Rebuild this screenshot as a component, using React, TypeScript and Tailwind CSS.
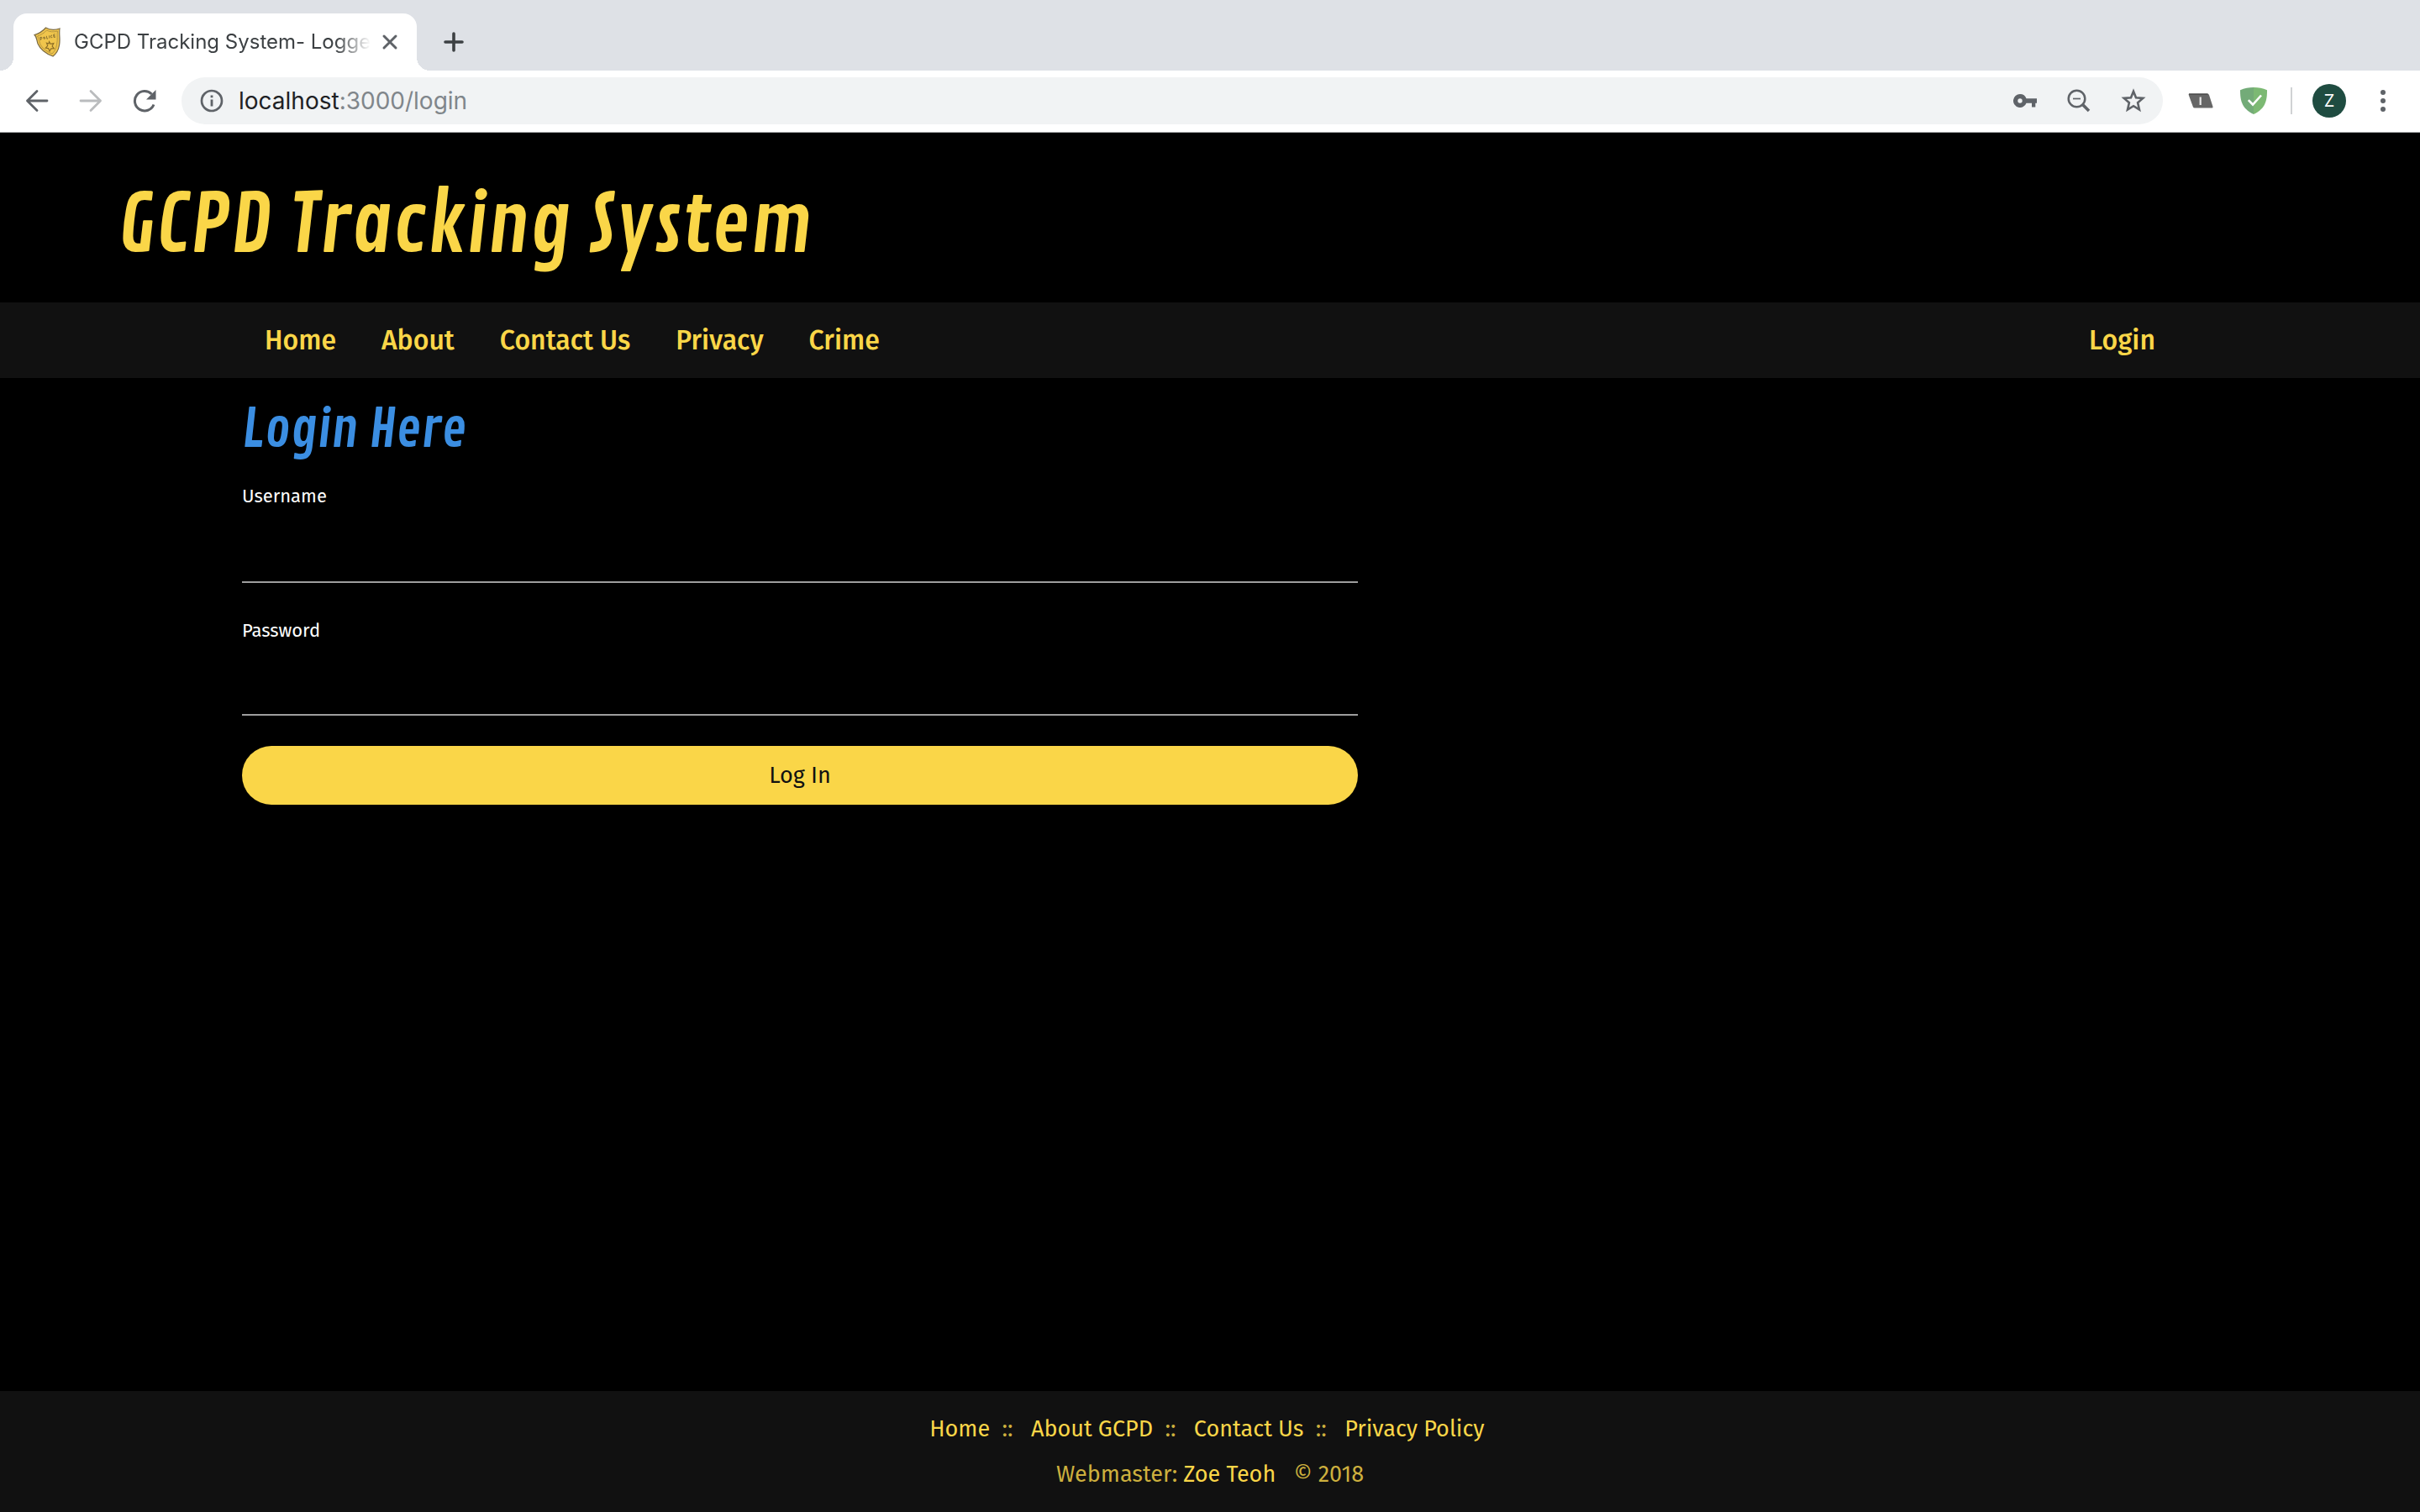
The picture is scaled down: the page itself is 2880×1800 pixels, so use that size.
import React from "react";

const pageFont = "font-['Fira_Sans','Noto_Sans',sans-serif]";
const titleFont = "font-['Contrail_One','Open_Sans_Condensed','Open_Sans',sans-serif]";

function Favicon() {
  return (
    <svg viewBox="0 0 32 36" className="h-9 w-8 shrink-0" aria-hidden="true">
      <path d="M1 9.500 C6 8 11 5 14.5 1 C19 3.500 25 4 31 2 C30 9 32 15 30.500 22 C29.500 28 27 32 23 35 C15 32 8 27 5 20 C3.500 16 4 12 1 9.500Z" fill="#f0c54c" stroke="#7a6a45" strokeWidth="1.200" />
      <path d="M4.500 11 C9 9.500 13 7 15.500 4 C19 6 24 6.500 28.500 5 C27.500 10 29 15 27.500 21.500 C26.500 26 25 29 22 32 C15 29 9.500 25 7.500 19.500 C6.500 16 6.500 14 4.500 11Z" fill="none" stroke="#a88a3c" strokeWidth="0.800" />
      <path d="M8.500 16 l-.8 -3.500 q2.500 -.8 2.300 1 q-.3 .8 -1.900 .8 M12 12 q1.900 0 1.600 2 q-1.600 1 -1.900 -.8z M15.300 10.800 l.6 3.400 l1.300 -.4 M18.500 10.300 l.5 3.200 M22 10 q-1.800 -.2 -1.500 1.800 q.4 1.600 1.800 .8 M25.500 8.800 l-1.800 .3 l.4 3.300 l2 -.4 M23.900 10.800 l1.500 -.2" fill="none" stroke="#7d672c" strokeWidth="0.900" />
      <path d="M18.500 17.500 l1.700 2.900 l3.600 -.8 l-1.700 3.300 l2.200 2.900 l-3.500 .1 l-1.800 3.100 l-1.400 -3.400 l-3.300 -.5 l2.500 -2.600 l-1.400 -3.300 l2.700 .8z" fill="none" stroke="#8a6c26" strokeWidth="1.100" />
    </svg>
  );
}

function BackIcon() {
  return (
    <svg viewBox="0 0 28 28" className="size-7" fill="none" stroke="currentColor" strokeWidth="2.800" strokeLinecap="round" strokeLinejoin="round" aria-hidden="true">
      <path d="M26 14H2.500M14 2.500 2.500 14 14 25.500" />
    </svg>
  );
}

function ForwardIcon() {
  return (
    <svg viewBox="0 0 28 28" className="size-7" fill="none" stroke="currentColor" strokeWidth="2.800" strokeLinecap="round" strokeLinejoin="round" aria-hidden="true">
      <path d="M2 14H25.500M14 2.500 25.500 14 14 25.500" />
    </svg>
  );
}

function ReloadIcon() {
  return (
    <svg viewBox="0 0 28 28" className="size-7" aria-hidden="true">
      <path d="M25 18.500A11.700 11.700 0 1 1 22.500 6" fill="none" stroke="currentColor" strokeWidth="3" />
      <path d="M27.500 1V12.500H16Z" fill="currentColor" />
    </svg>
  );
}

function InfoIcon() {
  return (
    <svg viewBox="0 0 28 28" className="size-7 shrink-0 text-[#5f6368]" aria-hidden="true">
      <circle cx="14" cy="14" r="12" fill="none" stroke="currentColor" strokeWidth="2.700" />
      <path d="M12.600 12.500h2.800v8h-2.800zM12.600 7.500h2.800v2.800h-2.800z" fill="currentColor" />
    </svg>
  );
}

function KeyIcon() {
  return (
    <svg viewBox="0 0 28 16" className="h-4 w-7" aria-hidden="true">
      <path fillRule="evenodd" fill="currentColor" d="M8 0a8 8 0 1 0 7.500 10.700H22V15.500h4.300V10.700H28V5.300H15.500A8 8 0 0 0 8 0ZM8 5.300a2.700 2.700 0 1 1 0 5.400a2.700 2.700 0 0 1 0-5.400Z" />
    </svg>
  );
}

function ZoomOutIcon() {
  return (
    <svg viewBox="0 0 28 28" className="size-7" fill="none" stroke="currentColor" aria-hidden="true">
      <circle cx="11.500" cy="11.500" r="9.800" strokeWidth="2.500" />
      <path d="M7 11.500H16" strokeWidth="1.700" />
      <path d="M18.800 18.800 26 26" strokeWidth="3.600" />
    </svg>
  );
}

function StarIcon() {
  return (
    <svg viewBox="0 0 30 30" className="h-[30px] w-[30px]" fill="none" stroke="currentColor" strokeWidth="2.600" aria-hidden="true">
      <path d="M15 3.800 18 11.200 26.300 11.900 20.100 17.200 22 25.500 15 21.200 8 25.500 9.900 17.200 3.700 11.900 12 11.200Z" />
    </svg>
  );
}

function TagIcon() {
  return (
    <svg viewBox="0 0 30 18" className="h-[18px] w-[30px]" aria-hidden="true">
      <path d="M1.500 .5H23Q24.500 .5 25 2L29.500 16Q29.800 17.500 28.500 17.500H8Q6.300 17.500 5.800 16L.7 2Q.3 .5 1.500 .5Z" fill="#666" />
      <path d="M1 1.200H23.500" stroke="#4d4d4d" strokeWidth="1.500" />
      <path d="M14.700 4.500V14" stroke="#e8e8e8" strokeWidth="2.200" />
    </svg>
  );
}

function ShieldIcon() {
  return (
    <svg viewBox="0 0 32 32" className="size-8" aria-hidden="true">
      <path d="M16 0C10.500 0 5 1 0 3.200C0 14 1 25 16 32Z" fill="#73ab78" />
      <path d="M16 0C21.500 0 27 1 32 3.200C32 14 31 25 16 32Z" fill="#7cb973" />
      <path d="M9.800 15.200 15 20.500 25 9.500" fill="none" stroke="#fff" strokeWidth="2.600" />
    </svg>
  );
}

function Tab() {
  return (
    <div className="relative flex h-[68px] w-[480px] items-center rounded-t-2xl bg-white pr-3.5 pl-6">
      <span className="absolute bottom-0 -left-4 size-4 bg-[radial-gradient(circle_at_0_0,transparent_16px,white_16px)]" />
      <span className="absolute -right-4 bottom-0 size-4 bg-[radial-gradient(circle_at_100%_0,transparent_16px,white_16px)]" />
      <Favicon />
      <p className="ml-4 text-2xl whitespace-nowrap text-[#3c4043] [mask-image:linear-gradient(to_right,black_88%,transparent)]">
        GCPD Tracking System- Logge
      </p>
      <button type="button" aria-label="Close tab" className="ml-auto flex size-9 shrink-0 items-center justify-center text-[#5f6368]">
        <svg viewBox="0 0 20 20" className="size-5" stroke="currentColor" strokeWidth="3" strokeLinecap="round" aria-hidden="true">
          <path d="M3 3 17 17M17 3 3 17" />
        </svg>
      </button>
    </div>
  );
}

function BrowserChrome() {
  return (
    <div className="border-b border-[#a9abad] bg-white font-['Inter',sans-serif]">
      <div className="flex h-[84px] items-end bg-[#dee1e6] pl-4">
        <Tab />
        <button type="button" aria-label="New tab" className="ml-6 flex h-[68px] w-10 items-center justify-center text-[#3c4043]">
          <svg viewBox="0 0 24 24" className="size-6" stroke="currentColor" strokeWidth="3.600" strokeLinecap="round" aria-hidden="true">
            <path d="M12 2V22M2 12H22" />
          </svg>
        </button>
      </div>
      <div className="flex h-[73px] items-center px-[30px] pb-px text-[#5f6368]">
        <div className="flex gap-9">
          <button type="button" aria-label="Back"><BackIcon /></button>
          <button type="button" aria-label="Forward" className="text-[#babcbe]"><ForwardIcon /></button>
          <button type="button" aria-label="Reload"><ReloadIcon /></button>
        </div>
        <div className="ml-[30px] flex h-14 grow items-center rounded-full bg-[#f1f3f4] pr-5 pl-[22px]">
          <InfoIcon />
          <p className="ml-[18px] grow text-[28px] text-[#80868b]">
            <span className="text-[#202124]">localhost</span>:3000/login
          </p>
          <div className="flex items-center gap-9">
            <button type="button" aria-label="Saved passwords"><KeyIcon /></button>
            <button type="button" aria-label="Zoom"><ZoomOutIcon /></button>
            <button type="button" aria-label="Bookmark this page"><StarIcon /></button>
          </div>
        </div>
        <button type="button" aria-label="Tag extension" className="ml-[30px]"><TagIcon /></button>
        <button type="button" aria-label="Ad blocker" className="ml-8"><ShieldIcon /></button>
        <span className="ml-7 h-8 w-0.5 bg-[#d0d2d4]" />
        <button type="button" aria-label="Profile" className="ml-6 size-10 rounded-full bg-[#1f4c41] text-xl text-white">Z</button>
        <button type="button" aria-label="Menu" className="ml-[30px] flex w-7 justify-center">
          <svg viewBox="0 0 6 28" className="h-7 w-1.5" fill="currentColor" aria-hidden="true">
            <circle cx="3" cy="4" r="3" />
            <circle cx="3" cy="14" r="3" />
            <circle cx="3" cy="24" r="3" />
          </svg>
        </button>
      </div>
    </div>
  );
}

function SiteNav() {
  return (
    <nav className="flex h-[90px] items-center justify-between bg-[#111] px-[10%] text-[32px] font-medium">
      <div className="flex">
        {["Home", "About", "Contact Us", "Privacy", "Crime"].map((item) => (
          <a key={item} href="#" className="px-[27px]">{item}</a>
        ))}
      </div>
      <a href="#" className="px-[27px]">Login</a>
    </nav>
  );
}

function LoginForm() {
  return (
    <form className="mt-[27px] flex w-7/12 flex-col pr-4">
      <label htmlFor="username" className="text-[22px] leading-8 text-white">Username</label>
      <input id="username" type="text" className="mt-[17px] h-[70px] border-b-2 border-[#9e9e9e] bg-transparent text-[27px] text-white outline-none" />
      <label htmlFor="password" className="mt-[41px] text-[22px] leading-8 text-white">Password</label>
      <input id="password" type="password" className="mt-[15px] h-[70px] border-b-2 border-[#9e9e9e] bg-transparent text-[27px] text-white outline-none" />
      <button type="submit" className="mt-9 h-[70px] rounded-full bg-[#fad648] text-[27px] text-[#111]">Log In</button>
    </form>
  );
}

function SiteFooter() {
  const links = ["Home", "About GCPD", "Contact Us", "Privacy Policy"];
  return (
    <footer className="bg-[#111] py-[18px] text-center text-[27px] leading-[54px] text-[#cdb03e]">
      <p className="whitespace-pre">
        {links.map((item) => (
          <React.Fragment key={item}>
            <a href="#" className="text-[#fad648]">{item}</a>
            {item !== "Privacy Policy" ? "\u00a0 ::\u00a0 \u00a0" : "\u00a0"}
          </React.Fragment>
        ))}
      </p>
      <p className="whitespace-pre">
        Webmaster: <a href="#" className="text-[#fad648]">Zoe Teoh</a>{"\u00a0 \u00a0"}© 2018
      </p>
    </footer>
  );
}

export default function App() {
  return (
    <div className="flex min-h-screen flex-col bg-black">
      <BrowserChrome />
      <div className={`flex grow flex-col text-[#fad648] ${pageFont}`}>
        <header className="px-[140px] pt-[61px] pb-[41px]">
          <h1 className={`text-8xl leading-[100px] font-normal ${titleFont}`}>GCPD Tracking System</h1>
        </header>
        <SiteNav />
        <main className="grow px-[10%] pt-[26px]">
          <h2 className={`text-[62px] leading-[72px] font-normal text-[#3b8ee2] ${titleFont}`}>Login Here</h2>
          <LoginForm />
        </main>
        <SiteFooter />
      </div>
    </div>
  );
}
